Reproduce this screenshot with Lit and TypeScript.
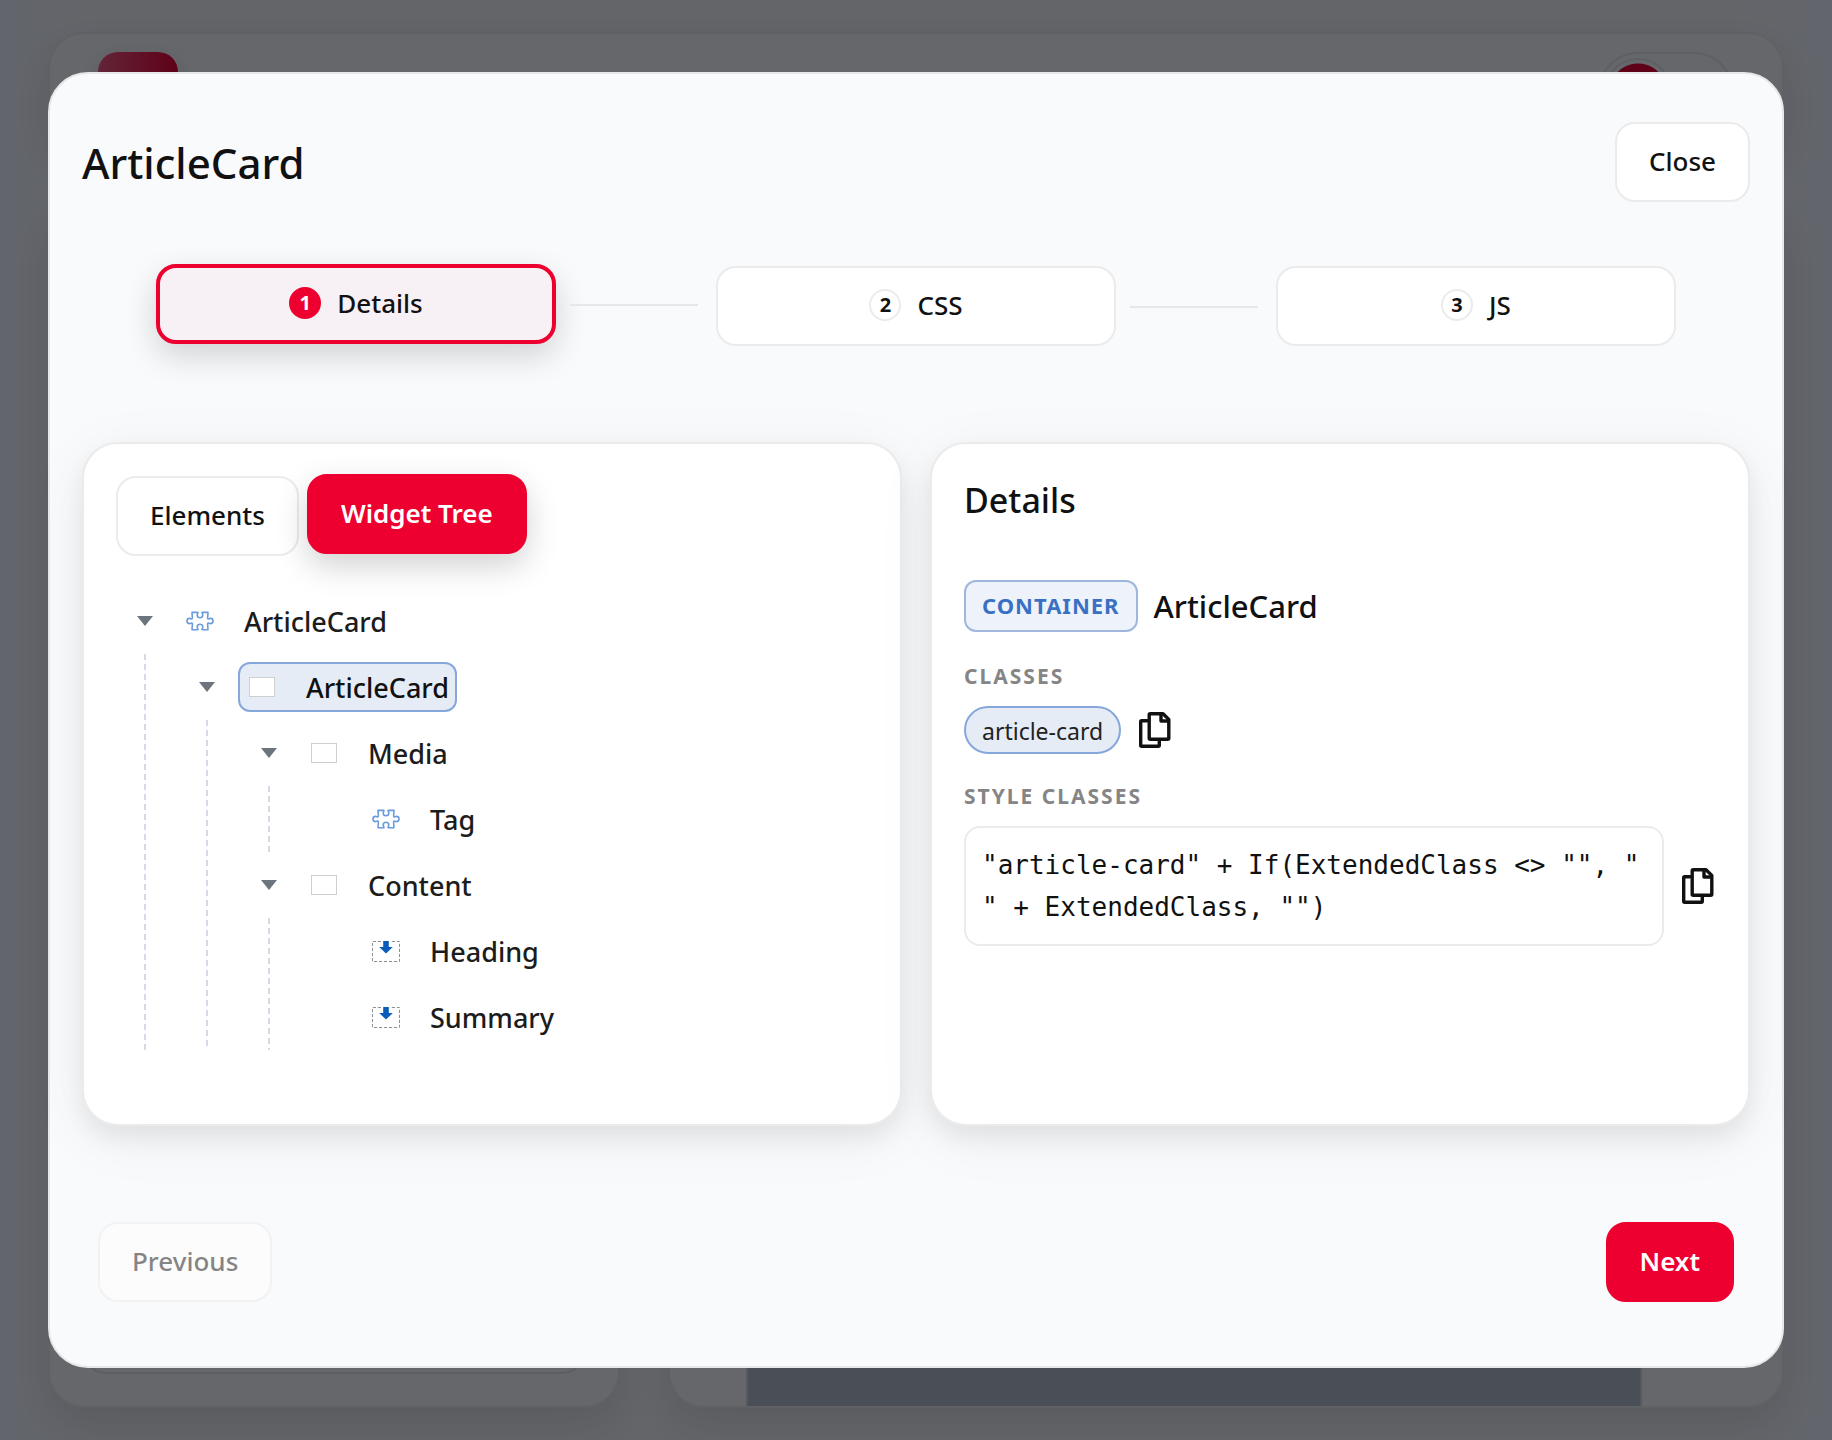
import { LitElement, html, css, svg, nothing } from "lit";
import { customElement, state } from "lit/decorators.js";
import { classMap } from "lit/directives/class-map.js";

type Kind = "block" | "container" | "placeholder";

interface TreeNode {
  id: string;
  label: string;
  kind: Kind;
  children?: TreeNode[];
}

const TREE: TreeNode = {
  id: "root",
  label: "ArticleCard",
  kind: "block",
  children: [
    {
      id: "card",
      label: "ArticleCard",
      kind: "container",
      children: [
        {
          id: "media",
          label: "Media",
          kind: "container",
          children: [{ id: "tag", label: "Tag", kind: "block" }],
        },
        {
          id: "content",
          label: "Content",
          kind: "container",
          children: [
            { id: "heading", label: "Heading", kind: "placeholder" },
            { id: "summary", label: "Summary", kind: "placeholder" },
          ],
        },
      ],
    },
  ],
};

const STEPS = ["Details", "CSS", "JS"];

const ICONS: Record<Kind, unknown> = {
  block: svg`<svg width="32" height="24" viewBox="0 0 32 24" fill="none" stroke="#6b9bdb" stroke-width="1.6" stroke-linejoin="round" aria-hidden="true">
    <path d="M8 3.4L13.6 3.2C14.7 3.4 13.2 4.8 13.2 6a2.8 2.8 0 0 0 5.6 0C18.8 4.8 17.3 3.4 18.4 3.2L24 3.4L23.6 9C23.8 10.8 25 9.4 26.4 9.4a2.6 2.6 0 0 1 0 5.2C25 14.6 23.8 13.2 23.6 15L24 20.6L18.4 20.8C17.3 20.6 18.8 19.2 18.8 18a2.8 2.8 0 0 0-5.6 0C13.2 19.2 14.7 20.6 13.6 20.8L8 20.6L8.4 15C8.2 13.2 7 14.6 5.6 14.6a2.6 2.6 0 0 1 0-5.2C7 9.4 8.2 10.8 8.4 9Z"/>
  </svg>`,
  container: svg`<svg width="32" height="24" viewBox="0 0 32 24" aria-hidden="true">
    <rect x="3.5" y="2.5" width="25" height="19" fill="#fff" stroke="#cdd0d1"/>
  </svg>`,
  placeholder: svg`<svg width="32" height="24" viewBox="0 0 32 24" aria-hidden="true">
    <path d="M11 2.5H2.5V22.5H29.5V2.5H21" fill="none" stroke="#8d9194" stroke-dasharray="3.2 1.8"/>
    <path d="M13.2 2h5.6v6h4L16 14.5 9.2 8h4z" fill="#0b5bb8"/>
  </svg>`,
};

const copyIcon = svg`<svg width="36" height="40" viewBox="0 0 36 40" fill="none" stroke="#111" stroke-width="3.4" stroke-linejoin="round" stroke-linecap="round" aria-hidden="true">
  <path d="M13.2 3.7H26L31.8 9.4V28.2a1 1 0 0 1-1 1H13.2a1 1 0 0 1-1-1V4.7a1 1 0 0 1 1-1z"/>
  <path d="M24 4.5V11H31"/>
  <path d="M10 10.7H4.700a1 1 0 0 0-1 1V35.300a1 1 0 0 0 1 1H21.300a1 1 0 0 0 1-1V31"/>
</svg>`;

@customElement("app-root")
export class AppRoot extends LitElement {
  @state() private step = 0;
  @state() private tab = "tree";
  @state() private selected = "card";
  @state() private collapsed = new Set<string>();

  static styles = css`
    :host {
      display: grid;
      min-height: 100vh;
      font-family: "Segoe UI", "Noto Sans", "Open Sans", sans-serif;
      font-size: 28px;
      color: #111;
      --red: #ed002f;
      --line: #ebebeb;
    }
    * {
      box-sizing: border-box;
    }
    h1,
    h2,
    h3,
    p,
    ul,
    ol {
      margin: 0;
      padding: 0;
      list-style: none;
    }
    button {
      font: inherit;
      color: inherit;
      cursor: pointer;
    }
    .page,
    .overlay {
      grid-area: 1 / 1;
    }

    /* page behind the dialog */
    .page {
      display: flex;
      flex-direction: column;
      gap: 48px;
      padding: 32px 48px;
      overflow: hidden;
      background: linear-gradient(90deg, #f5faff, #fafafb 6%, #fafafb 94%, #f5faff);
    }
    .sheet {
      border: 2px solid #efefef;
      border-radius: 36px;
      background: #fff;
      box-shadow: 0 16px 40px rgba(0, 0, 0, 0.1);
    }
    .topbar {
      display: flex;
      justify-content: space-between;
      padding: 18px 48px;
    }
    .logo {
      width: 80px;
      height: 80px;
      border-radius: 20px;
      background: linear-gradient(90deg, #f85a80, var(--red));
      box-shadow: 0 8px 24px rgba(0, 0, 0, 0.12);
    }
    .switch {
      width: 136px;
      height: 80px;
      padding: 4px;
      border: 2px solid #ececec;
      border-radius: 40px;
    }
    .knob {
      width: 68px;
      height: 68px;
      border: 2px solid #ececec;
      border-radius: 50%;
      background: radial-gradient(circle, var(--red) 28px, transparent 29px);
    }
    .columns {
      flex: 1;
      display: grid;
      grid-template-columns: 572fr 1116fr;
      gap: 48px;
    }
    .list {
      display: flex;
      padding: 32px;
    }
    .listbox {
      flex: 1;
      border: 2px solid #e8e8e8;
      border-radius: 24px;
    }
    .preview {
      display: flex;
      padding: 0 140px 0 76px;
    }
    .canvas {
      flex: 1;
      border: 0 solid #d8dce4;
      border-width: 0 2px;
      background: #b8c0cb;
    }

    .overlay {
      z-index: 1;
      display: flex;
      align-items: flex-start;
      padding: 72px 48px;
      background: rgba(0, 2, 8, 0.6);
    }
    .modal {
      flex: 1;
      min-width: 0;
      padding: 48px 32px 64px;
      border: 2px solid #e6e8e9;
      border-radius: 40px;
      background: #f9fafc;
    }
    .head {
      display: flex;
      align-items: center;
      justify-content: space-between;
    }
    .title {
      padding-top: 2px;
      font-size: 42px;
      line-height: 60px;
      font-weight: 500;
    }
    .btn {
      height: 80px;
      padding: 0 32px 2px;
      border: 2px solid var(--line);
      border-radius: 20px;
      background: #fff;
      font-size: 26px;
      font-weight: 500;
      white-space: nowrap;
    }
    .btn.primary {
      border-color: var(--red);
      background: var(--red);
      color: #fff;
      font-weight: 600;
    }
    .btn:disabled {
      opacity: 0.5;
      cursor: default;
    }
    .btn.raised {
      box-shadow: 0 12px 32px rgba(0, 0, 0, 0.18);
      transform: translateY(-2px);
    }

    .steps {
      display: flex;
      padding: 64px 74px 96px;
    }
    .step {
      flex: 1 1 160px;
      display: flex;
      align-items: center;
    }
    .step:last-child {
      flex-basis: 0px;
    }
    .step.on {
      transform: translateY(-2px);
    }
    .stepbtn {
      flex: 1;
      display: flex;
      align-items: center;
      justify-content: center;
      gap: 16px;
    }
    .on .stepbtn {
      border: 4px solid var(--red);
      background: #f7f0f5;
      box-shadow: 0 12px 32px rgba(0, 0, 0, 0.16);
    }
    .num {
      width: 32px;
      height: 32px;
      border: 2px solid var(--line);
      border-radius: 50%;
      background: #fff;
      font-size: 20px;
      line-height: 28px;
      font-weight: 700;
    }
    .on .num {
      border-color: var(--red);
      background: var(--red);
      color: #fff;
    }
    .connector {
      width: 128px;
      height: 2px;
      margin: 2px 18px 0 14px;
      background: #e5e7e9;
    }

    .cards {
      display: grid;
      grid-template-columns: 1fr 1fr;
      gap: 28px;
    }
    .card {
      min-width: 0;
      min-height: 684px;
      padding: 32px;
      border: 2px solid var(--line);
      border-radius: 36px;
      background: #fff;
      box-shadow:
        0 12px 24px rgba(0, 0, 0, 0.07),
        0 12px 64px rgba(0, 0, 0, 0.05);
    }
    .tabs {
      display: flex;
      gap: 8px;
      margin-bottom: 32px;
    }
    .row {
      display: flex;
      align-items: center;
      height: 66px;
      gap: 2px;
    }
    .toggle {
      flex: none;
      display: grid;
      place-items: center;
      width: 58px;
      height: 32px;
      padding: 0;
      border: 0;
      background: none;
    }
    .closed {
      transform: rotate(-90deg);
    }
    .node {
      display: flex;
      align-items: center;
      gap: 28px;
      height: 50px;
      padding: 0 6px;
      border: 2px solid transparent;
      border-radius: 12px;
      background: none;
      font-size: 27px;
      font-weight: 500;
      color: #1c1c1c;
    }
    .node.selected {
      border-color: #86a7dc;
      background: #e6ecf6;
      color: #111;
    }
    .branch {
      padding-left: 62px;
      background: repeating-linear-gradient(#d6d9e6 0 6px, transparent 6px 10px) 28px 0 / 2px 100% no-repeat;
    }

    .subtitle {
      font-size: 34px;
      line-height: 48px;
      font-weight: 500;
      margin-bottom: 56px;
    }
    .ident {
      display: flex;
      align-items: center;
      gap: 16px;
      margin-bottom: 28px;
    }
    .badge {
      height: 52px;
      padding: 0 16px;
      border: 2px solid #9fb7dd;
      border-radius: 12px;
      background: #eef3fb;
      color: #3a70c3;
      font-size: 22px;
      line-height: 46px;
      font-weight: 700;
      letter-spacing: 1px;
    }
    .name {
      font-size: 31px;
      line-height: 48px;
      font-weight: 500;
    }
    .label {
      font-size: 21px;
      line-height: 32px;
      font-weight: 700;
      letter-spacing: 2px;
      color: #858585;
      margin-bottom: 14px;
    }
    .line {
      display: flex;
      align-items: center;
      gap: 16px;
      margin-bottom: 26px;
    }
    .chip {
      height: 48px;
      padding: 0 16px;
      border: 2px solid #86a7dc;
      border-radius: 24px;
      background: #e6ecf6;
      font-size: 23px;
      line-height: 46px;
      color: #222;
    }
    .code {
      flex: 1;
      min-width: 0;
      padding: 16px;
      border: 2px solid var(--line);
      border-radius: 16px;
      background: #fff;
      font-family: Consolas, "DejaVu Sans Mono", monospace;
      font-size: 26px;
      line-height: 42px;
    }
    .copy {
      flex: none;
      display: grid;
      width: 36px;
      height: 40px;
      padding: 0;
      border: 0;
      background: none;
    }
    .foot {
      display: flex;
      justify-content: space-between;
      padding: 96px 16px 0;
    }
  `;

  private toggle(id: string) {
    const next = new Set(this.collapsed);
    if (!next.delete(id)) next.add(id);
    this.collapsed = next;
  }

  private renderNode(node: TreeNode): unknown {
    const open = !this.collapsed.has(node.id);
    return html`<li>
      <div class="row">
        ${node.children
          ? html`<button class="toggle" aria-label="Toggle ${node.label}" aria-expanded=${open} @click=${() => this.toggle(node.id)}>
              <svg class=${open ? "" : "closed"} width="16" height="10" viewBox="0 0 16 10" aria-hidden="true">
                <path d="M0 0H16L8 10Z" fill="#6c757d" />
              </svg>
            </button>`
          : html`<span class="toggle"></span>`}
        <button class=${classMap({ node: true, selected: this.selected === node.id })} @click=${() => (this.selected = node.id)}>
          ${ICONS[node.kind]}<span>${node.label}</span>
        </button>
      </div>
      ${node.children && open ? html`<ul class="branch">${node.children.map((c) => this.renderNode(c))}</ul>` : nothing}
    </li>`;
  }

  private renderTab(id: string, label: string) {
    const on = this.tab === id;
    return html`<button class=${classMap({ btn: true, primary: on, raised: on })} @click=${() => (this.tab = id)}>${label}</button>`;
  }

  render() {
    return html`
      <div class="page" aria-hidden="true">
        <div class="sheet topbar">
          <div class="logo"></div>
          <div class="switch"><div class="knob"></div></div>
        </div>
        <div class="columns">
          <div class="sheet list"><div class="listbox"></div></div>
          <div class="sheet preview"><div class="canvas"></div></div>
        </div>
      </div>
      <div class="overlay">
        <section class="modal" role="dialog" aria-modal="true" aria-labelledby="title">
          <header class="head">
            <h1 class="title" id="title">ArticleCard</h1>
            <button class="btn">Close</button>
          </header>
          <ol class="steps">
            ${STEPS.map(
              (name, i) => html`<li class=${classMap({ step: true, on: this.step === i })}>
                <button class="btn stepbtn" @click=${() => (this.step = i)}><span class="num">${i + 1}</span><span>${name}</span></button>
                ${i < STEPS.length - 1 ? html`<span class="connector"></span>` : nothing}
              </li>`,
            )}
          </ol>
          <div class="cards">
            <section class="card">
              <div class="tabs">${this.renderTab("elements", "Elements")}${this.renderTab("tree", "Widget Tree")}</div>
              <ul>
                ${this.renderNode(TREE)}
              </ul>
            </section>
            <section class="card">
              <h2 class="subtitle">Details</h2>
              <div class="ident"><span class="badge">CONTAINER</span><h3 class="name">ArticleCard</h3></div>
              <p class="label">CLASSES</p>
              <div class="line">
                <span class="chip">article-card</span>
                <button class="copy" aria-label="Copy classes">${copyIcon}</button>
              </div>
              <p class="label">STYLE CLASSES</p>
              <div class="line">
                <code class="code">"article-card" + If(ExtendedClass &lt;&gt; "", " " + ExtendedClass, "")</code>
                <button class="copy" aria-label="Copy style classes">${copyIcon}</button>
              </div>
            </section>
          </div>
          <footer class="foot">
            <button class="btn" ?disabled=${this.step === 0} @click=${() => this.step--}>Previous</button>
            <button class="btn primary" @click=${() => (this.step = Math.min(this.step + 1, STEPS.length - 1))}>Next</button>
          </footer>
        </section>
      </div>
    `;
  }
}
